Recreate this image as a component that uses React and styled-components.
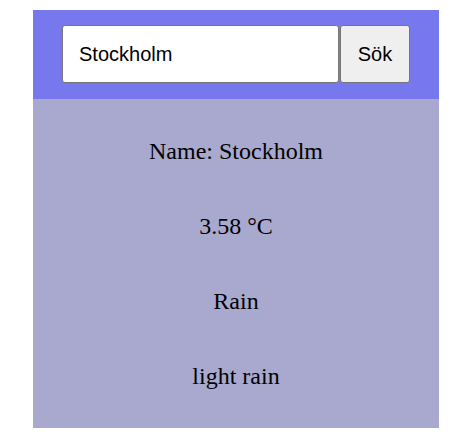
import React, { useState } from 'react';
import styled, { createGlobalStyle } from 'styled-components';

const GlobalStyle = createGlobalStyle`
  body {
    margin: 0;
    background: #fff;
    font-family: "Liberation Serif", "Times New Roman", serif;
  }
`;

const Page = styled.div`
  padding: 10px 0 0 33px;
`;

const Card = styled.div`
  width: 406px;
`;

const SearchBar = styled.form`
  display: flex;
  gap: 1px;
  padding: 15px 29px 16px;
  background: #7878ee;
`;

const CityInput = styled.input`
  flex: 1;
  min-width: 0;
  height: 58px;
  box-sizing: border-box;
  padding: 0 16px;
  font-family: "Liberation Sans", Arial, sans-serif;
  font-size: 20px;
  color: #000;
  background: #fff;
  border: 1px solid #767676;
  border-radius: 3px;
  outline: none;
`;

const SearchButton = styled.button`
  width: 70px;
  height: 58px;
  box-sizing: border-box;
  font-family: "Liberation Sans", Arial, sans-serif;
  font-size: 20px;
  color: #000;
  background: #efefef;
  border: 1px solid #767676;
  border-radius: 3px;
`;

const Weather = styled.div`
  display: flex;
  flex-direction: column;
  align-items: center;
  gap: 47px;
  padding: 38px 0 38px;
  background: #a9a9d0;
`;

const Line = styled.p`
  margin: 0;
  font-size: 24px;
  line-height: 28px;
  color: #000;
`;

export default function App() {
  const [city, setCity] = useState('Stockholm');
  const data = { name: 'Stockholm', temp: 3.58, main: 'Rain', description: 'light rain' };

  return (
    <Page>
      <GlobalStyle />
      <Card>
        <SearchBar onSubmit={e => e.preventDefault()}>
          <CityInput value={city} onChange={e => setCity(e.target.value)} />
          <SearchButton type="submit">Sök</SearchButton>
        </SearchBar>
        <Weather>
          <Line>Name: {data.name}</Line>
          <Line>{data.temp} °C</Line>
          <Line>{data.main}</Line>
          <Line>{data.description}</Line>
        </Weather>
      </Card>
    </Page>
  );
}
